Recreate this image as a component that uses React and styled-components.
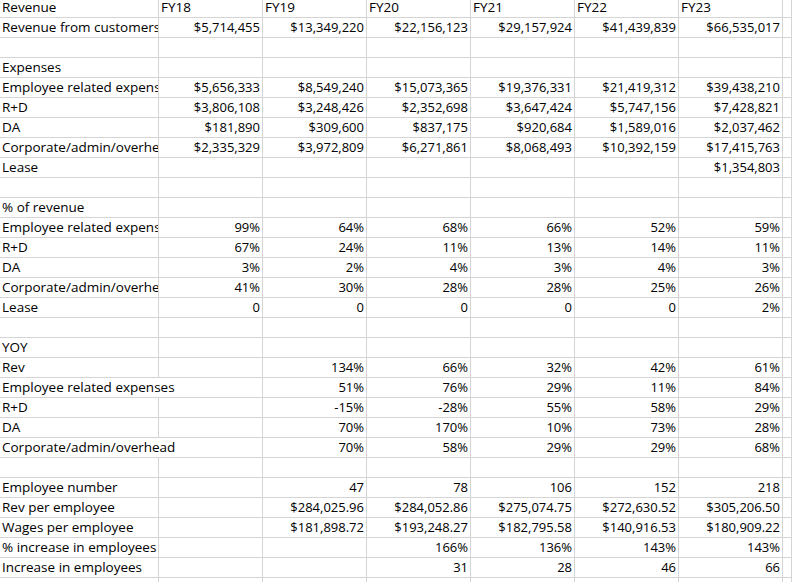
import React from 'react'
import styled, { createGlobalStyle } from 'styled-components'

const GlobalStyle = createGlobalStyle`
  html, body {
    margin: 0;
    padding: 0;
    background: #ffffff;
    overflow: hidden;
  }
`

const rows = [
  { label: 'Revenue', values: ['FY18', 'FY19', 'FY20', 'FY21', 'FY22', 'FY23'], header: true },
  { label: 'Revenue from customers', values: ['$5,714,455', '$13,349,220', '$22,156,123', '$29,157,924', '$41,439,839', '$66,535,017'] },
  { label: '', values: [] },
  { label: 'Expenses', values: [] },
  { label: 'Employee related expenses', values: ['$5,656,333', '$8,549,240', '$15,073,365', '$19,376,331', '$21,419,312', '$39,438,210'] },
  { label: 'R+D', values: ['$3,806,108', '$3,248,426', '$2,352,698', '$3,647,424', '$5,747,156', '$7,428,821'] },
  { label: 'DA', values: ['$181,890', '$309,600', '$837,175', '$920,684', '$1,589,016', '$2,037,462'] },
  { label: 'Corporate/admin/overhead', values: ['$2,335,329', '$3,972,809', '$6,271,861', '$8,068,493', '$10,392,159', '$17,415,763'] },
  { label: 'Lease', values: ['', '', '', '', '', '$1,354,803'] },
  { label: '', values: [] },
  { label: '% of revenue', values: [] },
  { label: 'Employee related expenses', values: ['99%', '64%', '68%', '66%', '52%', '59%'] },
  { label: 'R+D', values: ['67%', '24%', '11%', '13%', '14%', '11%'] },
  { label: 'DA', values: ['3%', '2%', '4%', '3%', '4%', '3%'] },
  { label: 'Corporate/admin/overhead', values: ['41%', '30%', '28%', '28%', '25%', '26%'] },
  { label: 'Lease', values: ['0', '0', '0', '0', '0', '2%'] },
  { label: '', values: [] },
  { label: 'YOY', values: [] },
  { label: 'Rev', values: ['', '134%', '66%', '32%', '42%', '61%'] },
  { label: 'Employee related expenses', values: ['', '51%', '76%', '29%', '11%', '84%'], spill: true },
  { label: 'R+D', values: ['', '-15%', '-28%', '55%', '58%', '29%'] },
  { label: 'DA', values: ['', '70%', '170%', '10%', '73%', '28%'] },
  { label: 'Corporate/admin/overhead', values: ['', '70%', '58%', '29%', '29%', '68%'], spill: true },
  { label: '', values: [] },
  { label: 'Employee number', values: ['', '47', '78', '106', '152', '218'] },
  { label: 'Rev per employee', values: ['', '$284,025.96', '$284,052.86', '$275,074.75', '$272,630.52', '$305,206.50'] },
  { label: 'Wages per employee', values: ['', '$181,898.72', '$193,248.27', '$182,795.58', '$140,916.53', '$180,909.22'] },
  { label: '% increase in employees', values: ['', '', '166%', '136%', '143%', '143%'] },
  { label: 'Increase in employees', values: ['', '', '31', '28', '46', '66'] },
  { label: '', values: [] },
]

function App() {
  return (
    <>
      <GlobalStyle />
      <Sheet>
        {rows.map((row, r) => {
          const start = row.spill ? 1 : 0
          const cells = []
          for (let c = start; c < 6; c++) {
            cells.push(
              <Cell key={c} $text={row.header} $top={r === 0}>
                {row.values[c] || ''}
              </Cell>
            )
          }
          return (
            <React.Fragment key={r}>
              <Cell $text $top={r === 0} $span={row.spill ? 2 : 1}>{row.label}</Cell>
              {cells}
              <Cell $top={r === 0} />
            </React.Fragment>
          )
        })}
      </Sheet>
    </>
  )
}

export default App

// first row is scrolled a bit out of view, so it is shorter
const Sheet = styled.div`
  display: grid;
  grid-template-columns: 159px repeat(6, 104px) 1fr;
  grid-template-rows: 18px;
  grid-auto-rows: 20px;
  font-family: "Open Sans", "Liberation Sans", sans-serif;
  color: #000000;
`

// text cells are left aligned, numbers sit on the right like in excel
const Cell = styled.div`
  grid-column: span ${props => props.$span || 1};
  box-sizing: border-box;
  border-right: 1px solid #d4d4d4;
  border-bottom: 1px solid #d4d4d4;
  padding: 0 2px;
  font-size: ${props => props.$text ? '13.5px' : '13px'};
  line-height: ${props => props.$top ? '15px' : '19px'};
  white-space: nowrap;
  overflow: hidden;
  text-align: ${props => props.$text ? 'left' : 'right'};
`
